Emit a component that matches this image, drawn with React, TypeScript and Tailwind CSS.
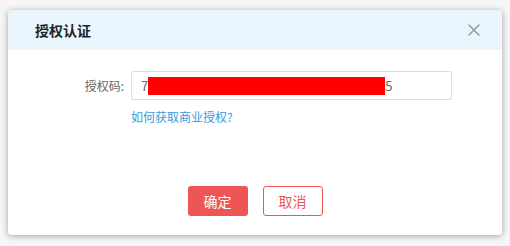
const FONT = "font-['Microsoft_YaHei','Noto_Sans_CJK_SC',sans-serif]"

export default function App() {
  return (
    <div className={`w-[510px] h-[246px] bg-[#f6f6f6] pt-[10px] pl-[8px] ${FONT}`}>
      <div className="w-[494px] h-[225px] bg-white rounded-[4px] shadow-[0_1px_6px_rgba(0,0,0,0.35)] overflow-hidden flex flex-col">
        {/* ── Header ── */}
        <div className="h-[40px] bg-[#e9f6fe] flex items-center justify-between pl-[27px] pr-[22px]">
          <span className="text-[14px] font-bold text-[#222]">授权认证</span>
          <svg width="12" height="12" viewBox="0 0 12 12" fill="none" stroke="#9a9a9a" strokeWidth="1.5" strokeLinecap="round">
            <path d="M1 1L11 11M11 1L1 11" />
          </svg>
        </div>

        {/* ── Body ── */}
        <div className="flex flex-col pt-[21px]">
          <div className="flex items-center gap-[7px]">
            <span className="w-[116px] text-right text-[12px] text-[#666]">授权码:</span>
            <div className="w-[321px] h-[29px] border border-[#ddd] rounded-[2px] flex items-center pl-[9px] text-[13px] text-[#666]">
              <span>7</span>
              <span className="w-[237px] h-[18px] bg-[#ff0000]" />
              <span>5</span>
            </div>
          </div>
          <a className="ml-[123px] mt-[8px] text-[12px] text-[#3a9bd9] leading-[18px]">如何获取商业授权?</a>
        </div>

        {/* ── Footer buttons ── */}
        <div className="mt-auto mb-[19px] flex justify-center gap-[15px]">
          <button className="w-[60px] h-[30px] rounded-[3px] bg-[#ee5656] text-white text-[14px]">确定</button>
          <button className="w-[60px] h-[30px] rounded-[3px] border border-[#ee5656] text-[#ee5656] bg-white text-[14px]">取消</button>
        </div>
      </div>
    </div>
  )
}
